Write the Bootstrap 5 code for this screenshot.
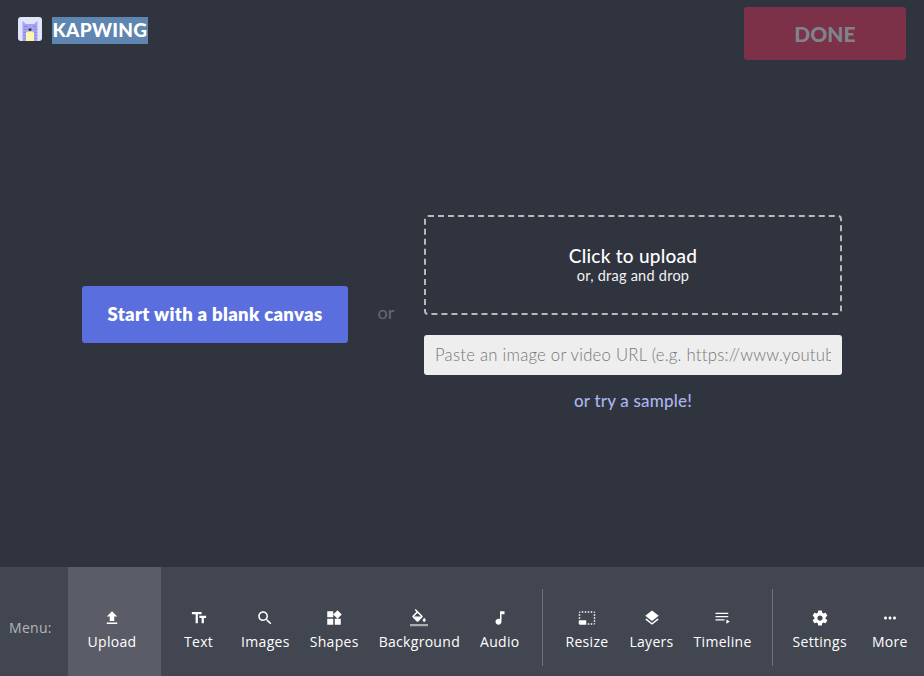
<!DOCTYPE html>
<html lang="en">
<head>
<meta charset="utf-8">
<title>Kapwing</title>
<link rel="stylesheet" href="https://cdn.jsdelivr.net/npm/bootstrap@5.3.0/dist/css/bootstrap.min.css">
<style>
html,body{height:100%;}
body{background:#30343f;color:#fff;font-family:"Lato","Liberation Sans",sans-serif;overflow:hidden;}
.shell{height:676px;}
.topbar{height:62px;padding:7px 18px 0 18px;}
.brand{margin-top:10px;gap:10px;height:27px;}
.brand-name{background:#5f86b0;font-size:19px;font-weight:900;line-height:25px;padding:0 0 2px 0;width:96px;text-align:center;letter-spacing:.3px;}
.done-btn{width:162px;height:53px;background:#7c3148;border:0;border-radius:3px;color:#7f848c;font-size:21px;font-weight:900;--bs-btn-bg:#7c3148;--bs-btn-border-color:#7c3148;--bs-btn-disabled-bg:#7c3148;--bs-btn-disabled-color:#7f848c;--bs-btn-disabled-opacity:1;}
.stage{flex:1 1 auto;padding:0 82px;}
.blank-btn{width:266px;height:57px;background:#5a6fdd;border:0;border-radius:3px;color:#fff;font-size:18.5px;font-weight:800;padding:0;letter-spacing:.32px;flex:none;}
.or-word{width:76px;text-align:center;color:#666a74;font-size:18px;margin-bottom:4px;flex:none;}
.upload-col{width:418px;margin-bottom:3px;flex:none;}
.dropzone{height:100px;border:2px dashed #b9b9b9;border-radius:4px;margin-bottom:20px;padding-bottom:2px;}
.drop-title{font-size:19px;font-weight:500;line-height:22px;letter-spacing:.25px;}
.drop-sub{font-size:14.5px;line-height:17px;color:#f2f2f2;letter-spacing:.25px;}
.url-input.form-control{height:40px;background:#eee;border:0;border-radius:3px;padding:0 11px;font-size:16.7px;font-weight:300;letter-spacing:.25px;}
.url-input.form-control::placeholder{color:#777;opacity:1;}
.sample-link{display:block;text-align:center;color:#aab4ee;font-size:17px;font-weight:500;text-decoration:none;margin-top:16px;line-height:20px;letter-spacing:.2px;}
.toolbar{height:109px;background:#424650;font-family:"Open Sans","Noto Sans",sans-serif;letter-spacing:.3px;}
.menu-lbl{width:68px;flex:none;padding:12px 0 0 9px;color:#b3b5ba;font-size:14px;font-weight:500;}
.tool{height:100%;padding:0 10px;color:#fff;font-size:14px;font-weight:500;display:flex;flex-direction:column;align-items:center;white-space:nowrap;flex:none;}
.tool svg{width:18px;height:18px;fill:#fff;margin-top:42px;margin-bottom:5px;flex:none;}
.tool span{line-height:19px;}
.tool-on{background:#5a5d68;width:93px;padding:0 5px 0 0;}
.tool-text{margin-left:13px;margin-right:8px;}
.tool-nudge{margin-left:1px;}
.tool-more{margin-left:5px;}
.sep{width:1px;height:77px;background:#6f727b;margin:22px 12px 0 13px;flex:none;}
.sep-late{margin:22px 10px 0 10px;}
</style>
</head>
<body>
<div class="shell d-flex flex-column">
  <header class="topbar d-flex justify-content-between align-items-start">
    <div class="brand d-flex align-items-start">
      <svg width="24" height="24" viewBox="0 0 24 24" aria-label="Kapwing logo">
        <rect width="24" height="24" rx="3" fill="#e3e3fb"/>
        <path d="M4.500 24V4l3.500 3h8l3.500-3v20z" fill="#a5a5ef"/>
        <path d="M6 9h3v1H6zm9 0h3v1h-3zM5.500 12h2v1h-2zm11 0h2v1h-2zM5.500 15h2v1h-2zm11 0h2v1h-2zM5.500 18h2v1h-2zm11 0h2v1h-2zM5.500 21h2v1h-2zm11 0h2v1h-2z" fill="#8585dd"/>
        <path d="M8 24v-7.500a2 2 0 0 1 2-2h4a2 2 0 0 1 2 2V24z" fill="#fdf5ad"/>
        <path d="M10.500 11.500h3V13l-1 1h-1l-1-1z" fill="#33333d"/>
      </svg>
      <span class="brand-name">KAPWING</span>
    </div>
    <button class="btn done-btn" disabled>DONE</button>
  </header>

  <main class="stage d-flex align-items-center">
    <button class="btn blank-btn">Start with a blank canvas</button>
    <div class="or-word">or</div>
    <div class="upload-col">
      <div class="dropzone d-flex flex-column align-items-center justify-content-center">
        <div class="drop-title">Click to upload</div>
        <div class="drop-sub">or, drag and drop</div>
      </div>
      <input class="form-control url-input" type="text" placeholder="Paste an image or video URL (e.g. https://www.youtube.com/watch?v=C0DPdy98e4c)">
      <a class="sample-link" href="#">or try a sample!</a>
    </div>
  </main>

  <nav class="toolbar d-flex align-items-stretch">
    <div class="menu-lbl d-flex align-items-center">Menu:</div>
    <div class="tool tool-on"><svg viewBox="0 0 24 24"><path d="M9 16h6v-6h4l-7-7-7 7h4zm-4 2h14v2H5z"/></svg><span>Upload</span></div>
    <div class="tool tool-text"><svg viewBox="0 0 24 24"><path d="M2.500 4v3h5v12h3V7h5V4h-13zm19 5h-9v3h3v7h3v-7h3V9z"/></svg><span>Text</span></div>
    <div class="tool"><svg viewBox="0 0 24 24"><path d="M15.500 14h-.79l-.28-.27C15.410 12.590 16 11.110 16 9.500 16 5.910 13.090 3 9.500 3S3 5.910 3 9.500 5.910 16 9.500 16c1.610 0 3.090-.59 4.230-1.570l.27.28v.79l5 4.990L20.490 19l-4.990-5zm-6 0C7.010 14 5 11.990 5 9.500S7.010 5 9.500 5 14 7.010 14 9.500 11.990 14 9.500 14z"/></svg><span>Images</span></div>
    <div class="tool"><svg viewBox="0 0 24 24"><path d="M13 13v8h8v-8h-8zM3 21h8v-8H3v8zM3 3v8h8V3H3zm13.660-1.310L11 7.340 16.660 13l5.660-5.660-5.660-5.650z"/></svg><span>Shapes</span></div>
    <div class="tool"><svg viewBox="0 0 24 24"><path d="M16.560 8.940L7.620 0 6.210 1.410l2.380 2.380-5.150 5.150c-.59.590-.59 1.540 0 2.120l5.500 5.500c.29.290.68.440 1.060.440s.77-.15 1.060-.44l5.500-5.500c.59-.58.590-1.530 0-2.120zM5.210 10L10 5.210 14.790 10H5.210zM19 11.500s-2 2.170-2 3.500c0 1.100.9 2 2 2s2-.9 2-2c0-1.330-2-3.500-2-3.500z"/><rect y="20" width="24" height="3" fill="#a9abb0"/></svg><span>Background</span></div>
    <div class="tool"><svg viewBox="0 0 24 24"><path d="M12 3v10.550c-.59-.34-1.270-.55-2-.55-2.210 0-4 1.790-4 4s1.790 4 4 4 4-1.790 4-4V7h4V3h-6z"/></svg><span>Audio</span></div>
    <div class="sep"></div>
    <div class="tool"><svg viewBox="0 0 24 24"><path d="M23 15h-2v2h2v-2zm0-4h-2v2h2v-2zm0 8h-2v2c1 0 2-1 2-2zM15 3h-2v2h2V3zm8 4h-2v2h2V7zm-2-4v2h2c0-1-1-2-2-2zM3 21h8v-6H1v4c0 1.100.9 2 2 2zM3 7H1v2h2V7zm12 12h-2v2h2v-2zm4-16h-2v2h2V3zm0 16h-2v2h2v-2zM3 3C2 3 1 4 1 5h2V3zm0 8H1v2h2v-2zm8-8H9v2h2V3zM7 3H5v2h2V3z"/></svg><span>Resize</span></div>
    <div class="tool tool-nudge"><svg viewBox="0 0 24 24"><path d="M11.990 18.540l-7.370-5.730L3 14.070l9 7 9-7-1.630-1.270-7.380 5.740zM12 16l7.360-5.730L21 9l-9-7-9 7 1.630 1.270L12 16z"/></svg><span>Layers</span></div>
    <div class="tool"><svg viewBox="0 0 24 24"><path d="M2 5h17v1.700H2zm0 4.300h17V11H2zm0 4.300h12v1.700H2zm14.500.4v5.500l4.500-2.750z"/></svg><span>Timeline</span></div>
    <div class="sep sep-late"></div>
    <div class="tool"><svg viewBox="0 0 24 24"><path d="M19.430 12.980c.04-.32.07-.64.07-.98s-.03-.66-.07-.98l2.110-1.650c.19-.15.24-.42.120-.64l-2-3.460c-.12-.22-.39-.3-.61-.22l-2.490 1c-.52-.4-1.080-.73-1.690-.98l-.38-2.650C14.460 2.180 14.250 2 14 2h-4c-.25 0-.46.18-.49.420l-.38 2.650c-.61.25-1.170.59-1.690.98l-2.490-1c-.23-.09-.49 0-.61.22l-2 3.460c-.13.22-.07.49.12.64l2.110 1.650c-.04.32-.07.65-.07.98s.03.66.07.98l-2.110 1.650c-.19.15-.24.42-.12.64l2 3.460c.12.22.39.3.61.22l2.490-1c.52.4 1.080.73 1.690.98l.38 2.650c.03.24.24.42.49.42h4c.25 0 .46-.18.49-.42l.38-2.650c.61-.25 1.170-.59 1.690-.98l2.490 1c.23.09.49 0 .61-.22l2-3.460c.12-.22.07-.49-.12-.64l-2.110-1.650zM12 15.500c-1.930 0-3.500-1.570-3.500-3.500s1.570-3.500 3.500-3.500 3.500 1.570 3.500 3.500-1.570 3.500-3.500 3.500z"/></svg><span>Settings</span></div>
    <div class="tool tool-more"><svg viewBox="0 0 24 24"><path d="M6 10c-1.100 0-2 .9-2 2s.9 2 2 2 2-.9 2-2-.9-2-2-2zm12 0c-1.100 0-2 .9-2 2s.9 2 2 2 2-.9 2-2-.9-2-2-2zm-6 0c-1.100 0-2 .9-2 2s.9 2 2 2 2-.9 2-2-.9-2-2-2z"/></svg><span>More</span></div>
  </nav>
</div>
<script src="https://cdn.jsdelivr.net/npm/bootstrap@5.3.0/dist/js/bootstrap.bundle.min.js"></script>
</body>
</html>
